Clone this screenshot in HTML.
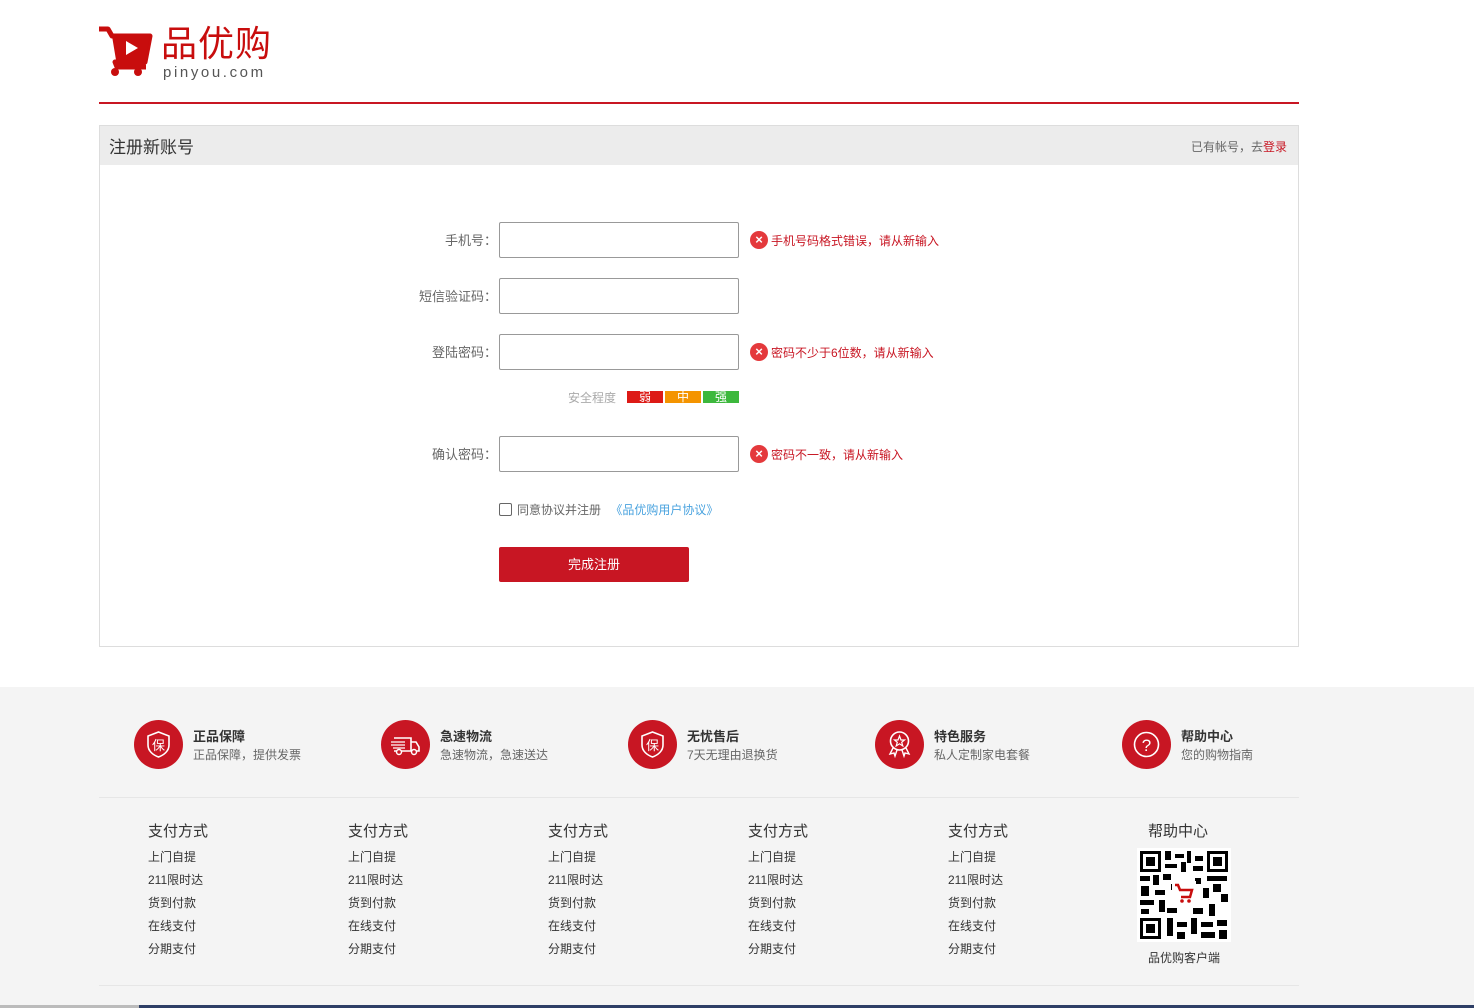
<!DOCTYPE html>
<html><head><meta charset="utf-8">
<style>
*{margin:0;padding:0;box-sizing:border-box}
body{width:1474px;height:1008px;position:relative;background:#fff;font-family:"Liberation Sans","Noto Sans CJK SC",sans-serif;color:#333;overflow:hidden}
.a{position:absolute}
.lbl{position:absolute;font-size:13px;color:#666;text-align:right;width:120px;left:377px}
.inp{position:absolute;left:499px;width:240px;height:36px;border:1px solid #999;border-radius:2px;background:#fff}
.err{position:absolute;left:750px;font-size:12px;color:#c81623;display:flex;align-items:center;gap:3px}
.err i{display:inline-block;width:18px;height:18px;border-radius:50%;background:#e4393c;color:#fff;font-style:normal;font-size:13px;line-height:18px;text-align:center;font-weight:bold}
.svc{position:absolute;top:720px}
.svc .c{position:absolute;left:0;top:0;width:49px;height:49px;border-radius:50%;background:#c81623}
.svc .t{position:absolute;left:59px;top:6px;font-size:13px;font-weight:bold;color:#333;white-space:nowrap}
.svc .s{position:absolute;left:59px;top:26px;font-size:12px;color:#666;white-space:nowrap}
.col{position:absolute;top:820px;font-size:12px;color:#333}
.col h4{font-size:15px;font-weight:normal;color:#333;margin-bottom:5px}
.col p{line-height:23px}
</style></head><body>
<svg class="a" style="left:98px;top:26px" width="56" height="56" viewBox="0 0 56 56">
<path d="M1 3 L10 3 L14 10 L52 10 L47 36 L17 36 L19 41 L48 41" fill="none" stroke="#c80d0d" stroke-width="5" stroke-linejoin="round"/>
<path d="M14 10 L52 10 L47 34 L18 34 Z" fill="#c80d0d"/>
<path d="M28 15 L28 29 L40 22 Z" fill="#fff"/>
<circle cx="17" cy="46" r="4" fill="#c80d0d"/><circle cx="40" cy="46" r="4" fill="#c80d0d"/>
</svg>
<div class="a" style="left:161px;top:22px;font-size:36px;color:#c80d0d;letter-spacing:1px;line-height:44px">品优购</div>
<div class="a" style="left:163px;top:64px;font-size:15px;color:#555;letter-spacing:2.6px">pinyou.com</div>
<div class="a" style="left:99px;top:102px;width:1200px;height:2px;background:#c81623"></div>

<div class="a" style="left:99px;top:125px;width:1200px;height:522px;border:1px solid #ddd"></div>
<div class="a" style="left:100px;top:126px;width:1198px;height:39px;background:#ececec"></div>
<div class="a" style="left:109px;top:133px;font-size:17px;color:#333">注册新账号</div>
<div class="a" style="left:1191px;top:138px;font-size:12px;color:#666">已有帐号，去<span style="color:#c81623">登录</span></div>

<div class="lbl" style="top:230px">手机号：</div><div class="inp" style="top:222px"></div>
<div class="err" style="top:231px"><i>×</i>手机号码格式错误，请从新输入</div>
<div class="lbl" style="top:286px">短信验证码：</div><div class="inp" style="top:278px"></div>
<div class="lbl" style="top:342px">登陆密码：</div><div class="inp" style="top:334px"></div>
<div class="err" style="top:343px"><i>×</i>密码不少于6位数，请从新输入</div>
<div class="a" style="left:568px;top:389px;font-size:12px;color:#aaa">安全程度</div>
<div class="a" style="left:627px;top:391px;width:36px;height:12px;background:#dd1a16;color:#fff;font-size:12px;line-height:12px;text-align:center">弱</div>
<div class="a" style="left:665px;top:391px;width:36px;height:12px;background:#f49400;color:#fff;font-size:12px;line-height:12px;text-align:center">中</div>
<div class="a" style="left:703px;top:391px;width:36px;height:12px;background:#3db83d;color:#fff;font-size:12px;line-height:12px;text-align:center">强</div>
<div class="lbl" style="top:444px">确认密码：</div><div class="inp" style="top:436px"></div>
<div class="err" style="top:445px"><i>×</i>密码不一致，请从新输入</div>

<div class="a" style="left:499px;top:503px;width:13px;height:13px;border:1px solid #666;border-radius:2px"></div>
<div class="a" style="left:517px;top:501px;font-size:12px;color:#666">同意协议并注册 <span style="color:#4aa3df;margin-left:6px">《品优购用户协议》</span></div>
<div class="a" style="left:499px;top:547px;width:190px;height:35px;background:#c81623;border-radius:2px;color:#fff;font-size:13px;line-height:35px;text-align:center">完成注册</div>

<div class="a" style="left:0;top:687px;width:1474px;height:321px;background:#f4f4f4"></div>
<div class="svc" style="left:134px"><div class="c"><svg width="49" height="49" viewBox="0 0 49 49"><path d="M24.5 12 L35 16 V25 C35 31 30 35 24.5 37 C19 35 14 31 14 25 V16 Z" fill="none" stroke="#fff" stroke-width="1.6"/><text x="24.5" y="30" font-size="13" fill="#fff" text-anchor="middle" font-family="Noto Sans CJK SC">保</text></svg></div><div class="t">正品保障</div><div class="s">正品保障，提供发票</div></div>
<div class="svc" style="left:381px"><div class="c"><svg width="49" height="49" viewBox="0 0 49 49"><path d="M13 18 H30 V31 H13 M30 22 H35 L38 27 V31 H30" fill="none" stroke="#fff" stroke-width="1.6"/><circle cx="18" cy="32" r="2.5" fill="#c81623" stroke="#fff" stroke-width="1.5"/><circle cx="33" cy="32" r="2.5" fill="#c81623" stroke="#fff" stroke-width="1.5"/><path d="M10 22 H24 M10 25 H24 M12 28 H24" stroke="#fff" stroke-width="1.2"/></svg></div><div class="t">急速物流</div><div class="s">急速物流，急速送达</div></div>
<div class="svc" style="left:628px"><div class="c"><svg width="49" height="49" viewBox="0 0 49 49"><path d="M24.5 12 L35 16 V25 C35 31 30 35 24.5 37 C19 35 14 31 14 25 V16 Z" fill="none" stroke="#fff" stroke-width="1.6"/><text x="24.5" y="30" font-size="13" fill="#fff" text-anchor="middle" font-family="Noto Sans CJK SC">保</text></svg></div><div class="t">无忧售后</div><div class="s">7天无理由退换货</div></div>
<div class="svc" style="left:875px"><div class="c"><svg width="49" height="49" viewBox="0 0 49 49"><circle cx="24.5" cy="21" r="9" fill="none" stroke="#fff" stroke-width="1.6"/><path d="M24.5 16 L26 20 H29.5 L26.7 22.3 L27.8 26 L24.5 23.8 L21.2 26 L22.3 22.3 L19.5 20 H23 Z" fill="none" stroke="#fff" stroke-width="1.2"/><path d="M18 28 L15 34 L19 33 L20 36 L22 30 M31 28 L34 34 L30 33 L29 36 L27 30" fill="none" stroke="#fff" stroke-width="1.4"/></svg></div><div class="t">特色服务</div><div class="s">私人定制家电套餐</div></div>
<div class="svc" style="left:1122px"><div class="c"><svg width="49" height="49" viewBox="0 0 49 49"><circle cx="24.5" cy="24.5" r="12" fill="none" stroke="#fff" stroke-width="1.6"/><text x="24.5" y="31" font-size="17" fill="#fff" text-anchor="middle" font-family="Liberation Sans">?</text></svg></div><div class="t">帮助中心</div><div class="s">您的购物指南</div></div>

<div class="a" style="left:99px;top:797px;width:1200px;height:1px;background:#e6e6e6"></div>
<div class="col" style="left:148px"><h4>支付方式</h4><p>上门自提</p><p>211限时达</p><p>货到付款</p><p>在线支付</p><p>分期支付</p></div>
<div class="col" style="left:348px"><h4>支付方式</h4><p>上门自提</p><p>211限时达</p><p>货到付款</p><p>在线支付</p><p>分期支付</p></div>
<div class="col" style="left:548px"><h4>支付方式</h4><p>上门自提</p><p>211限时达</p><p>货到付款</p><p>在线支付</p><p>分期支付</p></div>
<div class="col" style="left:748px"><h4>支付方式</h4><p>上门自提</p><p>211限时达</p><p>货到付款</p><p>在线支付</p><p>分期支付</p></div>
<div class="col" style="left:948px"><h4>支付方式</h4><p>上门自提</p><p>211限时达</p><p>货到付款</p><p>在线支付</p><p>分期支付</p></div>
<div class="col" style="left:1148px"><h4>帮助中心</h4></div>
<svg class="a" style="left:1137px;top:848px" width="94" height="94" viewBox="0 0 94 94">
<rect width="94" height="94" fill="#fff"/>
<g fill="#000">
<rect x="3" y="3" width="21" height="21"/><rect x="70" y="3" width="21" height="21"/><rect x="3" y="70" width="21" height="21"/>
</g>
<g fill="#fff"><rect x="6" y="6" width="15" height="15"/><rect x="73" y="6" width="15" height="15"/><rect x="6" y="73" width="15" height="15"/></g>
<g fill="#000"><rect x="9" y="9" width="9" height="9"/><rect x="76" y="9" width="9" height="9"/><rect x="9" y="76" width="9" height="9"/>
<rect x="28" y="3" width="6" height="9"/><rect x="38" y="6" width="9" height="4"/><rect x="50" y="3" width="4" height="12"/><rect x="58" y="8" width="8" height="5"/>
<rect x="28" y="16" width="12" height="4"/><rect x="44" y="14" width="5" height="10"/><rect x="56" y="18" width="10" height="5"/>
<rect x="3" y="28" width="10" height="5"/><rect x="16" y="27" width="6" height="10"/><rect x="26" y="26" width="8" height="6"/><rect x="70" y="28" width="20" height="5"/><rect x="76" y="36" width="8" height="8"/>
<rect x="4" y="38" width="8" height="10"/><rect x="18" y="42" width="10" height="5"/><rect x="66" y="40" width="6" height="10"/><rect x="84" y="46" width="7" height="8"/>
<rect x="3" y="52" width="14" height="5"/><rect x="22" y="52" width="6" height="12"/><rect x="30" y="60" width="10" height="5"/><rect x="56" y="60" width="10" height="6"/><rect x="72" y="56" width="6" height="12"/>
<rect x="4" y="61" width="8" height="5"/><rect x="30" y="70" width="6" height="18"/><rect x="40" y="74" width="10" height="5"/><rect x="54" y="70" width="6" height="16"/><rect x="64" y="74" width="12" height="5"/><rect x="80" y="72" width="10" height="6"/>
<rect x="40" y="84" width="8" height="7"/><rect x="64" y="84" width="14" height="6"/><rect x="82" y="82" width="8" height="9"/><rect x="34" y="36" width="4" height="6"/><rect x="58" y="30" width="6" height="6"/>
</g>
<rect x="35" y="33" width="24" height="24" fill="#fff"/>
<path d="M38 37 H41 L43 42 H55 L53 49 H44" fill="none" stroke="#c80d0d" stroke-width="2.5"/>
<circle cx="45" cy="53" r="1.8" fill="#c80d0d"/><circle cx="52" cy="53" r="1.8" fill="#c80d0d"/>
</svg>
<div class="a" style="left:1148px;top:949px;font-size:12px;color:#333">品优购客户端</div>
<div class="a" style="left:99px;top:985px;width:1200px;height:1px;background:#e6e6e6"></div>
<div class="a" style="left:0;top:1005px;width:139px;height:3px;background:#bbb"></div>
<div class="a" style="left:139px;top:1005px;width:1335px;height:3px;background:#2e3f66"></div>
</body></html>
